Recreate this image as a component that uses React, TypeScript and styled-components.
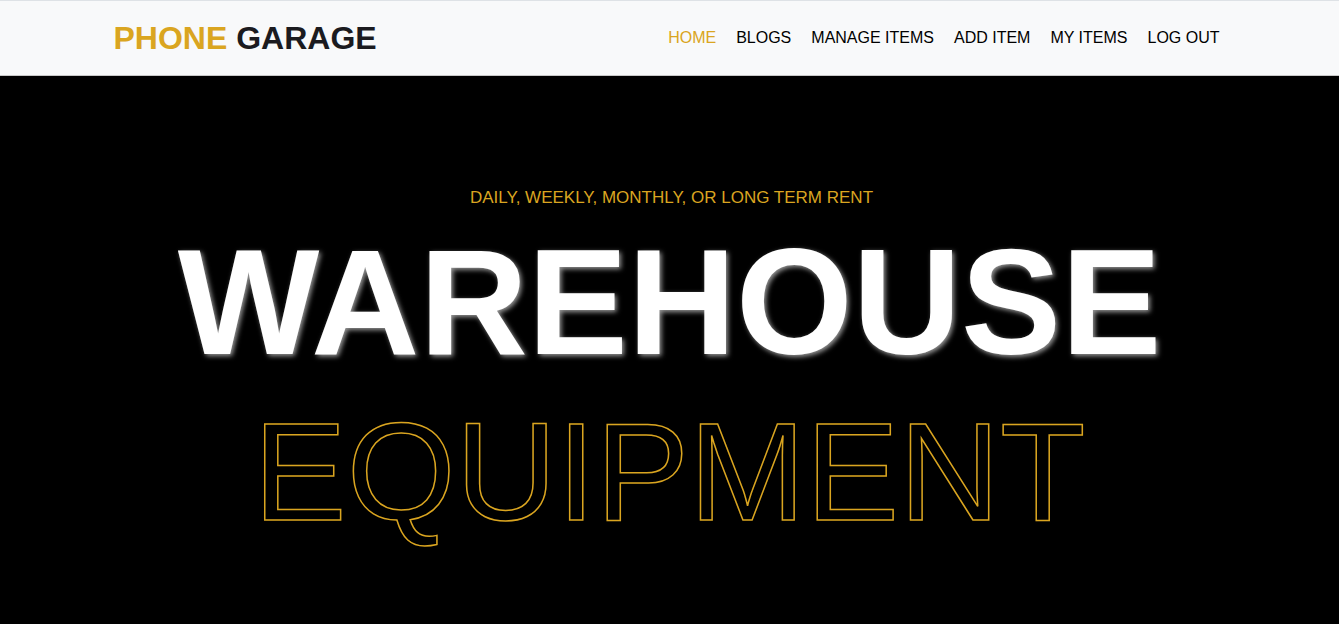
import styled, { createGlobalStyle } from "styled-components";

const GlobalStyle = createGlobalStyle`
  * {
    box-sizing: border-box;
  }
  body {
    margin: 0;
    font-family: "Liberation Sans", Arial, sans-serif;
    background-color: #000;
  }
`;

const GOLD = "#daa520";

const links = ["HOME", "BLOGS", "MANAGE ITEMS", "ADD ITEM", "MY ITEMS", "LOG OUT"];

const App = () => {
  return (
    <>
      <GlobalStyle />
      <HeaderStyle>
        <div className="container">
          <div className="logo">
            <span className="logo__accent">PHONE</span> GARAGE
          </div>
          <Nav>
            {links.map((link, i) => (
              <NavLink key={link} $active={i === 0}>
                {link}
              </NavLink>
            ))}
          </Nav>
        </div>
      </HeaderStyle>
      <Hero>
        <Subtitle>DAILY, WEEKLY, MONTHLY, OR LONG TERM RENT</Subtitle>
        <Title>WAREHOUSE</Title>
        <Outline>EQUIPMENT</Outline>
      </Hero>
    </>
  );
};

const HeaderStyle = styled.header`
  background-color: #f8f9fa;
  border-top: 1px solid #dee2e6;
  border-bottom: 1px solid #c8c8c8;
  height: 76px;
  .container {
    max-width: 1140px;
    height: 100%;
    margin: 0 auto;
    padding: 0 12px;
    display: flex;
    justify-content: space-between;
    align-items: center;
  }
  .logo {
    font-size: 32px;
    font-weight: 700;
    color: #1b1b1f;
    padding-left: 2px;
  }
  .logo__accent {
    color: ${GOLD};
  }
`;

const Nav = styled.nav`
  display: flex;
  align-items: center;
`;

const NavLink = styled.a<{ $active?: boolean }>`
  padding: 8px 10px;
  font-size: 16px;
  color: ${(p) => (p.$active ? GOLD : "#000")};
  cursor: pointer;
  &:last-child {
    padding-right: 8px;
  }
`;

const Hero = styled.section`
  background-color: #000;
  min-height: 548px;
  padding: 110px 0 60px;
  display: flex;
  flex-direction: column;
  align-items: center;
`;

const Subtitle = styled.p`
  margin: 0 0 0 4px;
  font-size: 17px;
  line-height: 24px;
  color: ${GOLD};
`;

const Title = styled.h1`
  margin: 17px 0 0;
  font-size: 150px;
  line-height: 150px;
  font-weight: 700;
  color: #fff;
  text-shadow: 2px 2px 5px #9a9a9a;
`;

const Outline = styled.h2`
  margin: 25px 0 0;
  font-size: 140px;
  line-height: 140px;
  font-weight: 400;
  color: transparent;
  -webkit-text-stroke: 1.5px ${GOLD};
`;

export default App;
